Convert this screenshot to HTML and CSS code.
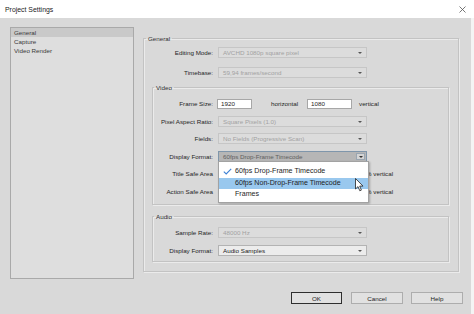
FILE: index.html
```html
<!DOCTYPE html>
<html lang="en">
<head>
<meta charset="UTF-8">
<title>Project Settings</title>
<link rel="stylesheet" href="styles.css">
</head>
<body>
<div class="titlebar">
  <span class="title">Project Settings</span>
  <svg class="close" width="7" height="7" viewBox="0 0 7 7"><path d="M0.5 0.5L6.5 6.5M6.5 0.5L0.5 6.5" stroke="#555" stroke-width="0.8" fill="none"/></svg>
</div>

<div class="dialog">
  <div class="content">
    <ul class="nav-list">
      <li class="selected">General</li>
      <li>Capture</li>
      <li>Video Render</li>
    </ul>

    <fieldset class="group group-outer">
      <legend>General</legend>
      <div class="row">
        <span class="label">Editing Mode:</span>
        <div class="select disabled">AVCHD 1080p square pixel<span class="arrow"></span></div>
      </div>
      <div class="row row-timebase">
        <span class="label">Timebase:</span>
        <div class="select disabled">59,94 frames/second<span class="arrow"></span></div>
      </div>

      <fieldset class="group group-inner group-video">
        <legend>Video</legend>
        <div class="row">
          <span class="label">Frame Size:</span>
          <input class="field field-w" type="text" value="1920">
          <span class="unit-h">horizontal</span>
          <input class="field field-h" type="text" value="1080">
          <span class="unit-v">vertical</span>
        </div>
        <div class="row">
          <span class="label">Pixel Aspect Ratio:</span>
          <div class="select disabled">Square Pixels (1.0)<span class="arrow"></span></div>
        </div>
        <div class="row">
          <span class="label">Fields:</span>
          <div class="select disabled">No Fields (Progressive Scan)<span class="arrow"></span></div>
        </div>
        <div class="row">
          <span class="label">Display Format:</span>
          <div class="select focused">60fps Drop-Frame Timecode<span class="arrow"></span></div>
        </div>
        <div class="row">
          <span class="label">Title Safe Area</span>
          <span class="safe-fields"></span>
          <span class="unit-pct">% vertical</span>
        </div>
        <div class="row">
          <span class="label">Action Safe Area</span>
          <span class="safe-fields"></span>
          <span class="unit-pct">% vertical</span>
        </div>
      </fieldset>

      <fieldset class="group group-inner group-audio">
        <legend>Audio</legend>
        <div class="row">
          <span class="label">Sample Rate:</span>
          <div class="select disabled">48000 Hz<span class="arrow"></span></div>
        </div>
        <div class="row row-audio-format">
          <span class="label">Display Format:</span>
          <div class="select">Audio Samples<span class="arrow"></span></div>
        </div>
      </fieldset>
    </fieldset>
  </div>

  <div class="buttons">
    <button class="btn btn-default">OK</button>
    <button class="btn btn-cancel">Cancel</button>
    <button class="btn btn-help">Help</button>
  </div>
</div>

<!-- open dropdown of the video Display Format -->
<div class="dropdown">
  <div class="dropdown-item checked">
    <svg class="check" width="9" height="7" viewBox="0 0 9 7"><path d="M0.8 3.6L3.2 6L8.2 0.8" stroke="#3b7fd4" stroke-width="1.1" fill="none"/></svg>
    60fps Drop-Frame Timecode
  </div>
  <div class="dropdown-item hover">60fps Non-Drop-Frame Timecode</div>
  <div class="dropdown-item">Frames</div>
  <svg class="cursor" width="9" height="14" viewBox="0 0 9 14"><path d="M0.5 0.5L0.5 11L3 8.6L4.8 12.8L6.4 12.1L4.7 8.1L8 8.1Z" fill="#fff" stroke="#222" stroke-width="0.8"/></svg>
</div>
</body>
</html>
```

FILE: styles.css
```css
/* Page */
body {
    margin: 0;
    width: 474px;
    height: 314px;
    overflow: hidden;
    position: relative;
    background-color: #f4f4f4;
    font-family: "Liberation Sans", Arial, sans-serif;
    font-size: 6.25px;
    color: #1e1e1e;
}

/* Title bar */
.titlebar {
    height: 18px;
    background-color: #fff;
    display: flex;
    align-items: center;
    justify-content: space-between;
    padding: 0 8px 0 5px;
    font-size: 6.9px;
    color: #222;
}

/* Dialog body */
.dialog {
    background-color: #d9d9d9;
    height: 296px;
    margin-right: 3px;
}

.content {
    display: flex;
    align-items: flex-start;
    gap: 9px;
    padding: 9px 0 0 10px;
}

/* Left list */
.nav-list {
    list-style: none;
    margin: 0;
    padding: 0;
    width: 124px;
    height: 252px;
    box-sizing: border-box;
    border: 1px solid #a9a9a9;
    background-color: #dedede;
    flex: none;
}

.nav-list li {
    height: 9px;
    line-height: 9px;
    padding-left: 3px;
    color: #3a3a3a;
}

.nav-list li.selected {
    background-color: #c9c9c9;
}

/* Group boxes */
.group {
    margin: 0;
    min-width: 0;
    border: 1px solid #c3c3c3;
    box-shadow: 1px 1px 0 #ebebeb, inset 1px 1px 0 #ebebeb;
}

.group legend {
    padding: 0 2px;
    line-height: 9px;
    color: #2a2a2a;
}

.group-outer {
    width: 316px;
    box-sizing: border-box;
    margin-top: 7px;
    padding: 4px 9px 9px 8px;
}

.group-outer legend {
    margin-left: -6px;
}

.group-inner {
    padding: 6px 0 7px 0;
}

.group-inner legend {
    margin-left: 1px;
}

.group-video {
    margin-top: 5px;
}

.group-audio {
    margin-top: 7.5px;
    padding-bottom: 5px;
}

/* Rows */
.row {
    display: flex;
    align-items: center;
    height: 11px;
}

.group-inner .row + .row {
    margin-top: 6.5px;
}

.row-timebase {
    margin-top: 9px;
}

.group-audio .row-audio-format {
    margin-top: 8px;
}

.label {
    width: 66px;
    flex: none;
    box-sizing: border-box;
    padding-right: 5px;
    text-align: right;
    color: #262626;
}

.group-inner .label {
    width: 65px;
}

/* Dropdowns */
.select {
    position: relative;
    width: 149px;
    height: 11px;
    box-sizing: border-box;
    border: 1px solid #b3b3b3;
    background-color: #ececec;
    padding-left: 4px;
    line-height: 9px;
    color: #222;
}

.select.disabled {
    background-color: #dcdcdc;
    border-color: #c6c6c6;
    color: #a2a2a2;
}

.select.focused {
    background-color: #b6b6b6;
    border-color: #7f96ab;
    color: #606060;
}

.arrow {
    position: absolute;
    right: 4px;
    top: 4px;
    border-left: 2px solid transparent;
    border-right: 2px solid transparent;
    border-top: 2px solid #555;
}

.select.focused .arrow {
    right: 1px;
    top: 1px;
    width: 9px;
    height: 7px;
    box-sizing: border-box;
    background-color: #d4d4d4;
    border: 1px solid #9aa6b1;
}

.select.focused .arrow::after {
    content: "";
    position: absolute;
    left: 2px;
    top: 2px;
    border-left: 2px solid transparent;
    border-right: 2px solid transparent;
    border-top: 2px solid #333;
}

/* Text fields */
.field {
    height: 10px;
    box-sizing: border-box;
    border: 1px solid #a7a7a7;
    background-color: #fff;
    padding: 0 3px;
    font-family: inherit;
    font-size: 6.25px;
    color: #222;
}

.field-w {
    width: 35px;
    margin-left: -1px;
}

.field-h {
    width: 45px;
}

.unit-h {
    width: 55px;
    box-sizing: border-box;
    padding-left: 19px;
}

.unit-v {
    margin-left: 7px;
}

.safe-fields {
    width: 148px;
    flex: none;
}

/* Open dropdown list */
.dropdown {
    position: absolute;
    left: 218px;
    top: 161px;
    width: 151px;
    box-sizing: border-box;
    padding: 4px 0 1px;
    background-color: #fff;
    border: 1px solid #a2a2a2;
    box-shadow: 1px 1px 2px rgba(0, 0, 0, 0.25);
    font-size: 7.1px;
    color: #1e1e1e;
}

.dropdown-item {
    position: relative;
    height: 11.5px;
    line-height: 11.5px;
    padding-left: 16px;
}

.dropdown-item.hover {
    background-color: #99c8ee;
}

.check {
    position: absolute;
    left: 4px;
    top: 2px;
}

.cursor {
    position: absolute;
    left: 136px;
    top: 16px;
}

/* Buttons */
.buttons {
    display: flex;
    justify-content: flex-end;
    padding: 13px 8px 0 0;
}

.btn {
    height: 12px;
    width: 52px;
    padding: 0;
    box-sizing: border-box;
    border: 1px solid #adadad;
    background-color: #e1e1e1;
    font-family: inherit;
    font-size: 6.25px;
    color: #222;
}

.btn-default {
    width: 51px;
    border-color: #2f2f2f;
}

.btn-cancel {
    margin-left: 9px;
}

.btn-help {
    margin-left: 8px;
}
```
